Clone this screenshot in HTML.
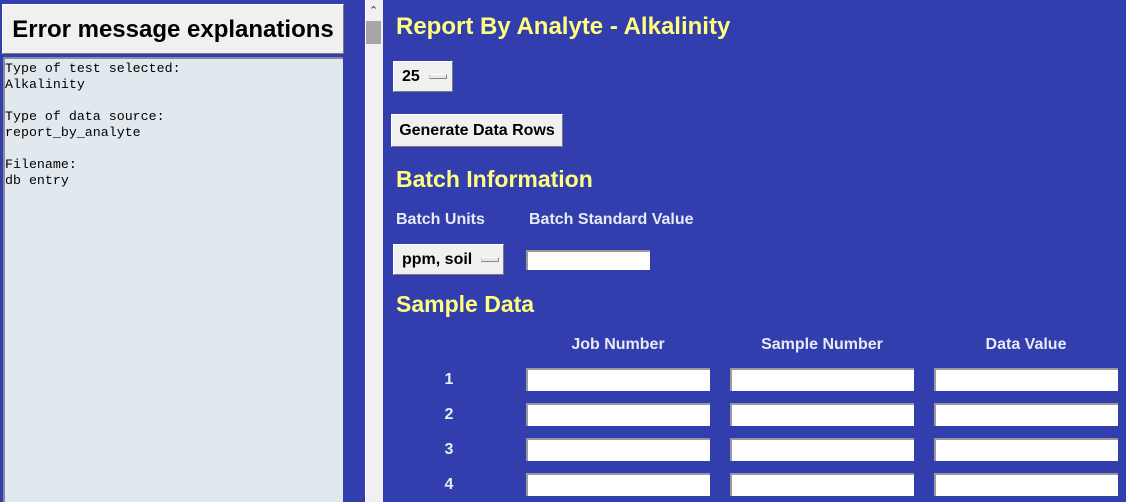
<!DOCTYPE html>
<html><head><style>
*{margin:0;padding:0;box-sizing:border-box}
body{width:1126px;height:502px;background:#323eae;position:relative;overflow:hidden;font-family:"Liberation Sans",Arial,sans-serif}
.a{position:absolute}
.btn{background:#f0f0f0;border:1px solid;border-color:#fff #7a7a7a #7a7a7a #fff;color:#000;font-weight:bold}
.y{color:#ffff80;font-weight:bold;font-size:23px}
.l{color:#e6ecf5;font-weight:bold;font-size:16px}
.in{background:#fff;border-top:2px solid #9a9a9a;border-left:2px solid #9a9a9a;height:23px;width:184px}
.dash{display:inline-block;width:18px;height:5px;border:1px solid #888;border-color:#fff #888 #888 #ccc;background:#e8e8e8;vertical-align:middle}
</style></head><body>
<div class="a btn" style="left:2px;top:4px;width:342px;height:50px;font-size:24px;font-weight:bold;text-align:center;line-height:50px">Error message explanations</div>
<div class="a" style="left:3px;top:57px;width:340px;height:445px;background:#e2e9ee;border-top:2px solid #8a8a9a;border-left:2px solid #8a8a9a;font-family:'Courier New','Liberation Mono',monospace;font-size:13.3px;line-height:16px;padding:2px 0 0 0;white-space:pre;color:#000">Type of test selected:
Alkalinity

Type of data source:
report_by_analyte

Filename:
db entry</div>
<div class="a" style="left:365px;top:0;width:18px;height:502px;background:#f0f0f0;border-left:1px solid #fff"></div>
<div class="a" style="left:369px;top:4px;font-size:11px;color:#333">&#8963;</div>
<div class="a" style="left:366px;top:21px;width:15px;height:23px;background:#a6a6a6"></div>

<div class="a y" style="left:396px;top:13px;font-size:24px">Report By Analyte - Alkalinity</div>
<div class="a btn" style="left:393px;top:61px;width:60px;height:31px;font-size:16px;line-height:29px;padding-left:8px">25 &nbsp;<span class="dash"></span></div>
<div class="a btn" style="left:391px;top:114px;width:172px;height:33px;font-size:16px;line-height:31px;text-align:center">Generate Data Rows</div>
<div class="a y" style="left:396px;top:166px">Batch Information</div>
<div class="a l" style="left:396px;top:211px">Batch Units</div>
<div class="a l" style="left:529px;top:211px">Batch Standard Value</div>
<div class="a btn" style="left:393px;top:244px;width:111px;height:31px;font-size:16px;line-height:29px;padding-left:8px">ppm, soil &nbsp;<span class="dash"></span></div>
<div class="a in" style="left:526px;top:250px;width:124px;height:20px"></div>
<div class="a y" style="left:396px;top:291px">Sample Data</div>
<div class="a l" style="left:526px;top:336px;width:184px;text-align:center">Job Number</div>
<div class="a l" style="left:730px;top:336px;width:184px;text-align:center">Sample Number</div>
<div class="a l" style="left:934px;top:336px;width:184px;text-align:center">Data Value</div>

<div class="a l" style="left:440px;top:371px;width:18px;text-align:center">1</div>
<div class="a l" style="left:440px;top:406px;width:18px;text-align:center">2</div>
<div class="a l" style="left:440px;top:441px;width:18px;text-align:center">3</div>
<div class="a l" style="left:440px;top:476px;width:18px;text-align:center">4</div>

<div class="a in" style="left:526px;top:368px"></div><div class="a in" style="left:730px;top:368px"></div><div class="a in" style="left:934px;top:368px"></div>
<div class="a in" style="left:526px;top:403px"></div><div class="a in" style="left:730px;top:403px"></div><div class="a in" style="left:934px;top:403px"></div>
<div class="a in" style="left:526px;top:438px"></div><div class="a in" style="left:730px;top:438px"></div><div class="a in" style="left:934px;top:438px"></div>
<div class="a in" style="left:526px;top:473px"></div><div class="a in" style="left:730px;top:473px"></div><div class="a in" style="left:934px;top:473px"></div>
</body></html>
